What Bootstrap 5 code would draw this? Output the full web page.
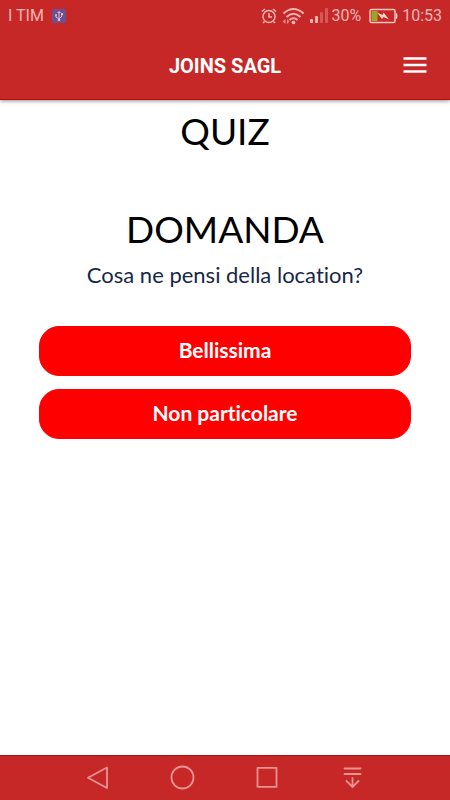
<!DOCTYPE html>
<html lang="it">
<head>
<meta charset="utf-8">
<meta name="viewport" content="width=device-width, initial-scale=1">
<title>Joins Sagl</title>
<link href="https://cdn.jsdelivr.net/npm/bootstrap@5.3.0/dist/css/bootstrap.min.css" rel="stylesheet">
<style>
body { font-family: Lato, "Liberation Sans", sans-serif; }
.question, .answer { font-variant-ligatures: none; }
.app-header { background: #c62827; box-shadow: 0 1px 4px rgba(0,0,0,.45); border-bottom: 1px solid #b30d0d; font-family: Roboto, "Liberation Sans", sans-serif; }
.status-bar { height: 32px; padding: 0 8px; color: #f2b5b4; font-size: 16px; line-height: 32px; }
.title-bar { min-height: 67px; padding: 0 23px; }
.title-bar h1 { font-size: 20px; line-height: 24px; font-weight: 700; }
.side-slot { width: 24px; }
.menu-btn { width: 24px; height: 24px; line-height: 0; }
.heading { font-size: 37px; line-height: 48px; font-weight: 400; color: #000; }
.domanda { margin-top: 50px; }
.question { font-size: 22px; line-height: 28px; color: #182747; }
.quiz { padding: 7px 39px 24px; }
.answer { --bs-btn-color: #fff; --bs-btn-bg: #f00; --bs-btn-border-color: #f00; --bs-btn-hover-color: #fff; --bs-btn-hover-bg: #e00; --bs-btn-hover-border-color: #e00; --bs-btn-border-radius: 20px; --bs-btn-font-size: 21px; --bs-btn-font-weight: 700; --bs-btn-line-height: 24px; --bs-btn-padding-y: 4px; min-height: 50px; padding-bottom: 7px; }
.answers { gap: 13px; margin-top: 37px; }
.soft-keys { background: #c62827; border-top: 1px solid #b30d0d; height: 45px; padding: 0 55px; }
.soft-keys svg { width: 26px; height: 26px; stroke: #eb9391; }
</style>
<script src="https://cdn.jsdelivr.net/npm/bootstrap@5.3.0/dist/js/bootstrap.bundle.min.js" defer></script>
</head>
<body class="d-flex flex-column min-vh-100 bg-white">
<header class="app-header">
  <div class="status-bar d-flex align-items-center justify-content-between">
    <div class="d-flex align-items-center gap-2">
      <span>I TIM</span>
      <svg width="14" height="14" viewBox="0 0 14 14" aria-hidden="true"><rect width="14" height="14" rx="2" fill="#6b5192"/><g fill="none" stroke="#e3b8cd"><path d="M7 3v7M4 6v2l3 2 3-3V5"/></g><path d="M5 4l2-2 2 2z" fill="#e3b8cd"/><circle cx="7" cy="11" r="1.3" fill="#e3b8cd"/><circle cx="4" cy="6" r="1" fill="#e3b8cd"/><path d="M9 4h2v2H9z" fill="#e3b8cd"/></svg>
    </div>
    <div class="d-flex align-items-center">
      <svg class="me-1" width="18" height="18" viewBox="0 0 18 18" fill="none" stroke="#f2b5b4" stroke-width="1.5" aria-hidden="true"><circle cx="9" cy="9.5" r="6"/><path d="M9 6v4h3M2 4.5L5 2M16 4.5L13 2M4.500 14.500L3 16M13.500 14.500l1.500 1.500"/></svg>
      <svg class="me-1" width="22" height="18" viewBox="0 0 22 18" fill="none" stroke="#f2b5b4" stroke-width="2" aria-hidden="true"><path d="M1.500 6.500Q11.500-2.500 21.500 6.500M4.500 10Q11.500 3.500 18.500 10M7.500 13Q11.500 9.500 15.500 13"/><circle cx="11.500" cy="15.500" r="1.800" fill="#f2b5b4" stroke="none"/><path d="M3.500 12v5L.500 14.500zM5 12v5l2.500-2.500z" fill="#e88b8a" stroke="none"/></svg>
      <svg width="23" height="16" viewBox="-2 0 23 16" fill="#f2b5b4" aria-hidden="true"><rect y="11" width="3" height="4" rx="1"/><rect x="5" y="8" width="3" height="7" rx="1"/><rect x="10" y="4" width="3" height="11" rx="1" opacity=".35"/><rect x="15" width="3" height="15" rx="1" opacity=".35"/></svg>
      <span class="me-2">30%</span>
      <svg class="me-1" width="29" height="16" viewBox="0 0 29 16" aria-hidden="true"><rect x="1" y="1.500" width="25" height="13" rx="1.500" fill="none" stroke="#f6c4c0" stroke-width="1.500"/><path d="M2.500 3h6v10h-6z" fill="#94aa24"/><path d="M27 5q1.500 0 1.500 3T27 11z" fill="#f6c4c0"/><path d="M8 4.500L13.500 7 14.500 4.500 20 11.500 14.500 9 13 11z" fill="#fad4ce"/></svg>
      <span>10:53</span>
    </div>
  </div>
  <nav class="title-bar d-flex align-items-center justify-content-between text-white" aria-label="Principale">
    <span class="side-slot"></span>
    <h1 class="m-0">JOINS SAGL</h1>
    <button type="button" class="menu-btn btn p-0 border-0 rounded-0" aria-label="Menu"><svg width="24" height="24" viewBox="0 0 24 24" fill="#fff" aria-hidden="true"><path d="M.500 3.300h23v2.400H.500zM.500 9.800h23v2.400H.500zM.500 16.300h23v2.400H.500z"/></svg></button>
  </nav>
</header>
<main class="quiz flex-grow-1 text-center">
  <h2 class="heading m-0">QUIZ</h2>
  <h3 class="heading domanda mb-2">DOMANDA</h3>
  <p class="question m-0">Cosa ne pensi della location?</p>
  <div class="answers d-grid">
    <button type="button" class="answer btn">Bellissima</button>
    <button type="button" class="answer btn">Non particolare</button>
  </div>
</main>
<footer class="soft-keys d-flex align-items-center justify-content-around">
  <button type="button" class="btn p-0 border-0 d-flex" aria-label="Indietro"><svg viewBox="0 0 26 26" fill="none" stroke-width="1.800" stroke-linejoin="round"><path d="M22 2.500v20.500L3 12.800z"/></svg></button>
  <button type="button" class="btn p-0 border-0 d-flex" aria-label="Home"><svg viewBox="0 0 26 26" fill="none" stroke-width="1.800"><circle cx="12.500" cy="12.500" r="11"/></svg></button>
  <button type="button" class="btn p-0 border-0 d-flex" aria-label="App recenti"><svg viewBox="0 0 26 26" fill="none" stroke-width="1.800" stroke-linejoin="round"><path d="M2.500 2.800h19v19h-19z"/></svg></button>
  <button type="button" class="btn p-0 border-0 d-flex" aria-label="Notifiche"><svg viewBox="0 0 26 26" fill="none" stroke-width="1.800" stroke-linecap="round"><path d="M4.500 3.500h16M4.500 9h16M12.500 13v9M6.500 16l6 6 6-6"/></svg></button>
</footer>
</body>
</html>
